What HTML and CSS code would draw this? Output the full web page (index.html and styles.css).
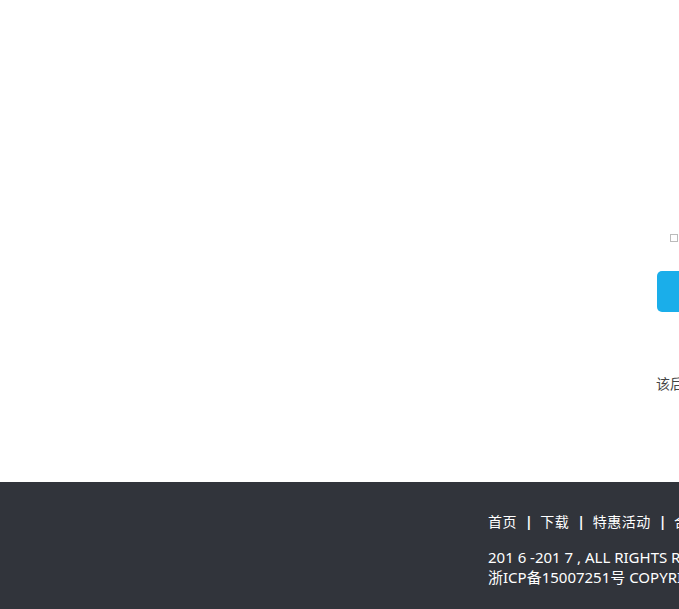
FILE: index.html
```html
<!DOCTYPE html>
<html lang="zh-CN">
<head>
<meta charset="utf-8">
<title>登录</title>
<link rel="stylesheet" href="styles.css">
</head>
<body>
<main class="main">
  <div class="login">
    <label class="remember"><span class="check"></span><span class="remember-text">记住密码</span></label>
    <button class="submit">登录</button>
    <p class="tip">该后台账号仅供内部人员使用</p>
  </div>
</main>
<footer class="footer">
  <div class="footer-inner">
    <nav class="links">
      <a href="#">首页</a><span class="sep">|</span>
      <a href="#">下载</a><span class="sep">|</span>
      <a href="#">特惠活动</a><span class="sep">|</span>
      <a href="#">合作伙伴</a>
    </nav>
    <p class="copy">201 6 -201 7 , ALL RIGHTS RESERVED</p>
    <p class="copy">浙ICP备15007251号 COPYRIGHT</p>
  </div>
</footer>
</body>
</html>
```
FILE: styles.css
```css
html, body {
  margin: 0;
  padding: 0;
  overflow: hidden;
  background: #fff;
  font-family: "Noto Sans", "Noto Sans CJK SC", sans-serif;
}
.main {
  height: 482px;
  overflow: hidden;
  padding-left: 656px;
  box-sizing: border-box;
}
.login {
  width: 320px;
  padding-top: 233px;
}
.remember {
  display: flex;
  align-items: center;
  padding-left: 14px;
  height: 10px;
  font-size: 12px;
  color: #666;
  white-space: nowrap;
}
.check {
  width: 6px;
  height: 6px;
  border: 1px solid #bbb;
  background: #fff;
  flex: none;
}
.remember-text { margin-left: 6px; }
.submit {
  display: block;
  margin: 28px 0 0 1px;
  width: 300px;
  height: 41px;
  border: 0;
  border-radius: 5px;
  background: #1aaeea;
  color: #fff;
  font-size: 16px;
  font-family: inherit;
}
.tip {
  margin: 62px 0 0;
  font-size: 14px;
  line-height: 20px;
  color: #444;
  white-space: nowrap;
}
.footer {
  background: #31343b;
  height: 127px;
  overflow: hidden;
  padding-left: 488px;
  color: #fff;
}
.footer-inner {
  padding-top: 30px;
  width: 500px;
  white-space: nowrap;
}
.links {
  font-size: 14px;
  line-height: 20px;
  letter-spacing: 0.5px;
}
.links a {
  color: #fff;
  text-decoration: none;
}
.sep {
  margin: 0 3px 0 8px;
  font-weight: bold;
}
.copy {
  margin: 0;
  font-size: 15px;
  line-height: 20px;
}
.links + .copy { margin-top: 15px; }
```
